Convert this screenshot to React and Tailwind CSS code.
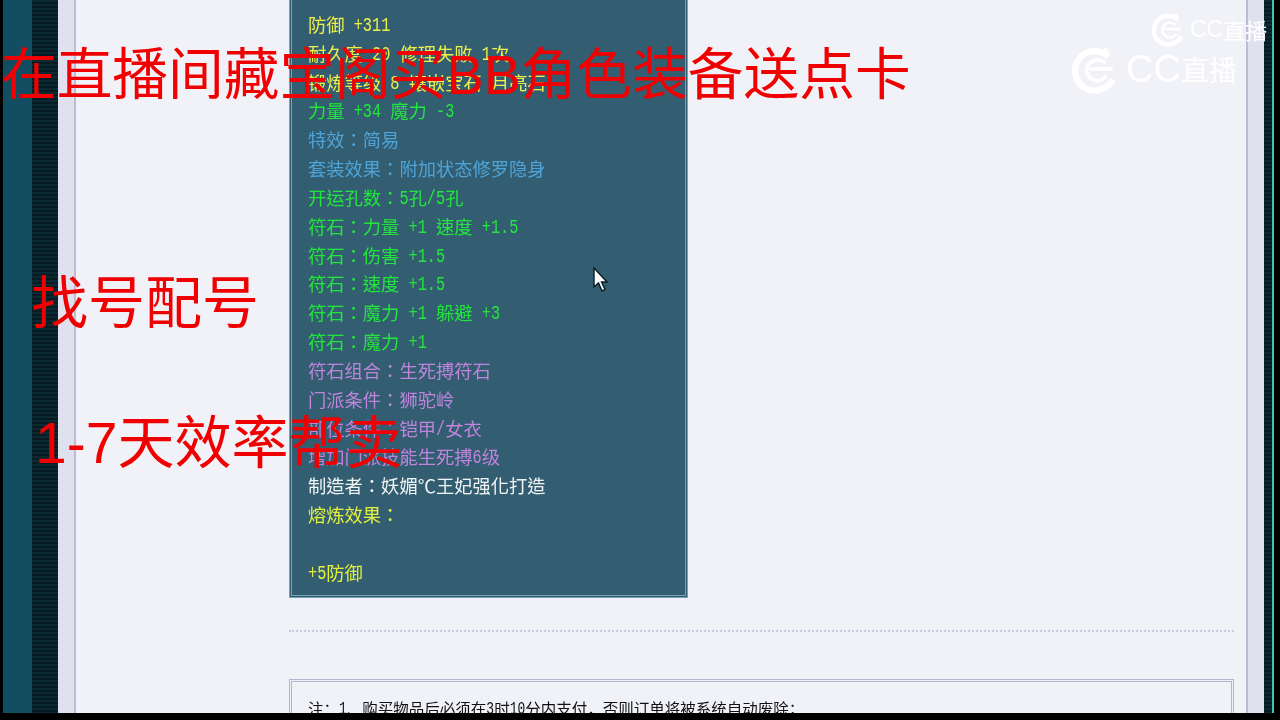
import React from 'react';

const cjk = '"Noto Sans CJK SC", "Noto Sans", sans-serif';
const cjkCentered = '"Noto Sans CJK TC", "Noto Sans", sans-serif';

const LINES = [
    { text: '防御 +311', color: 'text-[#eef04a]' },
    { text: '耐久度 20 修理失败 1次', color: 'text-[#eef04a]' },
    { text: '锻炼等级 8 镶嵌宝石 月亮石', color: 'text-[#eef04a]' },
    { text: '力量 +34 魔力 -3', color: 'text-[#22e63c]' },
    { text: '特效：简易', color: 'text-[#4ea3d8]' },
    { text: '套装效果：附加状态修罗隐身', color: 'text-[#4ea3d8]' },
    { text: '开运孔数：5孔/5孔', color: 'text-[#22e63c]' },
    { text: '符石：力量 +1 速度 +1.5', color: 'text-[#22e63c]' },
    { text: '符石：伤害 +1.5', color: 'text-[#22e63c]' },
    { text: '符石：速度 +1.5', color: 'text-[#22e63c]' },
    { text: '符石：魔力 +1 躲避 +3', color: 'text-[#22e63c]' },
    { text: '符石：魔力 +1', color: 'text-[#22e63c]' },
    { text: '符石组合：生死搏符石', color: 'text-[#bf84dc]' },
    { text: '门派条件：狮驼岭', color: 'text-[#bf84dc]' },
    { text: '部位条件：铠甲/女衣', color: 'text-[#bf84dc]' },
    { text: '增加门派技能生死搏6级', color: 'text-[#bf84dc]' },
    { text: '制造者：妖媚℃王妃强化打造', color: 'text-[#f0f4f4]' },
    { text: '熔炼效果：', color: 'text-[#e4f03c]' },
    { text: '\u00a0', color: 'text-[#e4f03c]' },
    { text: '+5防御', color: 'text-[#e4f03c]' },
];

// latin runs sit on a half-width grid like the old bitmap font
const Mixed = ({ text, latin }) => text.split(/([\x20-\x7e]+)/).map((run, i) =>
    /^[\x20-\x7e]+$/.test(run)
        ? <span key={i} className={`inline-block font-['Liberation_Mono'] whitespace-pre scale-y-[1.35] -translate-y-[2px] ${latin}`}>{run}</span>
        : <span key={i}>{run}</span>
);

const Logo = ({ className }) => (
    <svg viewBox="0 0 48 48" className={className} fill="none" stroke="currentColor">
        <path d="M36 12 A19 19 0 1 0 40 34" strokeWidth="6" />
        <path d="M33 19 A10 10 0 1 0 34 30" strokeWidth="3.5" />
        <path d="M18 24 H40" strokeWidth="3.5" />
        <path d="M32 4 l4 5" strokeWidth="3" />
    </svg>
);

const Cursor = () => (
    <svg viewBox="0 0 18 26" className="absolute left-[592px] top-[267px] w-[18px] h-[26px]">
        <path d="M2 1 V20 L6.5 16 L10 24 L13 22.5 L9.5 15 H15 Z" fill="#fff" stroke="#0c1a22" strokeWidth="1.4" />
    </svg>
);

const Stripes = ({ className }) => (
    <div className={`bg-[repeating-linear-gradient(180deg,#0b2a33_0px,#0b2a33_2px,#061b22_2px,#061b22_4px)] shrink-0 ${className}`} />
);

export default function App() {
    return (
        <div className="relative w-[1280px] h-[720px] overflow-hidden bg-black blur-[0.4px]" style={{ fontFamily: cjk }}>
            <div className="flex h-[713px] overflow-hidden">
                <div className="w-[3px] bg-black shrink-0" />
                <div className="w-[29px] bg-[#114e62] shrink-0" />
                <Stripes className="w-[26px]" />
                <div className="w-[16px] bg-[#e0e1ee] shrink-0" />
                <main className="flex-1 min-w-0 bg-[#f1f2f8] border-x-2 border-[#bcbdd2] pl-[213px] pr-[12px]">
                    <section className="w-[399px] h-[598px] bg-[#335e72] border-[3px] border-t-0 border-double border-[#74a3b8] pl-[16px] pt-[10px]" style={{ fontFamily: cjkCentered }}>
                        {LINES.map((line, i) => (
                            <div key={i} className={`h-[28.84px] leading-[28.84px] text-[18.3px] whitespace-nowrap ${line.color}`}>
                                <Mixed text={line.text} latin="text-[15.25px]" />
                            </div>
                        ))}
                    </section>
                    <div className="mt-[32px] border-t-2 border-dotted border-[#c9cade]" />
                    <section className="mt-[47px] h-[60px] border-[3px] border-double border-[#b4b5cc] pl-[16px] pt-[15px] text-[15.5px] text-[#111] whitespace-nowrap">
                        <Mixed text="注：1、购买物品后必须在3时10分内支付，否则订单将被系统自动废除；" latin="text-[13px]" />
                    </section>
                </main>
                <div className="w-[16px] bg-[#e0e1ee] shrink-0" />
                <Stripes className="w-[8px]" />
                <div className="w-[2px] bg-[#43c4b4] shrink-0" />
                <div className="w-[6px] bg-black shrink-0" />
            </div>

            <div className="absolute left-[1151px] top-[11px] flex items-center text-white">
                <Logo className="w-[36px] h-[36px]" />
                <span className="ml-[3px] font-['Liberation_Sans'] text-[23px] leading-none">CC</span>
                <span className="text-[22px] leading-none">直播</span>
            </div>
            <div className="absolute left-[1071px] top-[44px] flex items-center text-white">
                <Logo className="w-[50px] h-[50px]" />
                <span className="ml-[5px] font-['Liberation_Sans'] text-[38px] leading-none">CC</span>
                <span className="text-[28px] leading-none">直播</span>
            </div>
            <Cursor />

            <div className="absolute left-[1px] top-[30px] text-[55.7px] leading-[80px] text-[#f00000] whitespace-nowrap">在直播间藏宝阁买<span className="font-['Liberation_Sans']">BB</span>角色装备送点卡</div>
            <div className="absolute left-[31px] top-[258px] text-[57px] leading-[80px] text-[#f00000] whitespace-nowrap">找号配号</div>
            <div className="absolute left-[35px] top-[398px] text-[57px] leading-[80px] text-[#f00000] whitespace-nowrap"><span className="font-['Liberation_Sans']">1-7</span>天效率帮卖</div>
        </div>
    );
}
